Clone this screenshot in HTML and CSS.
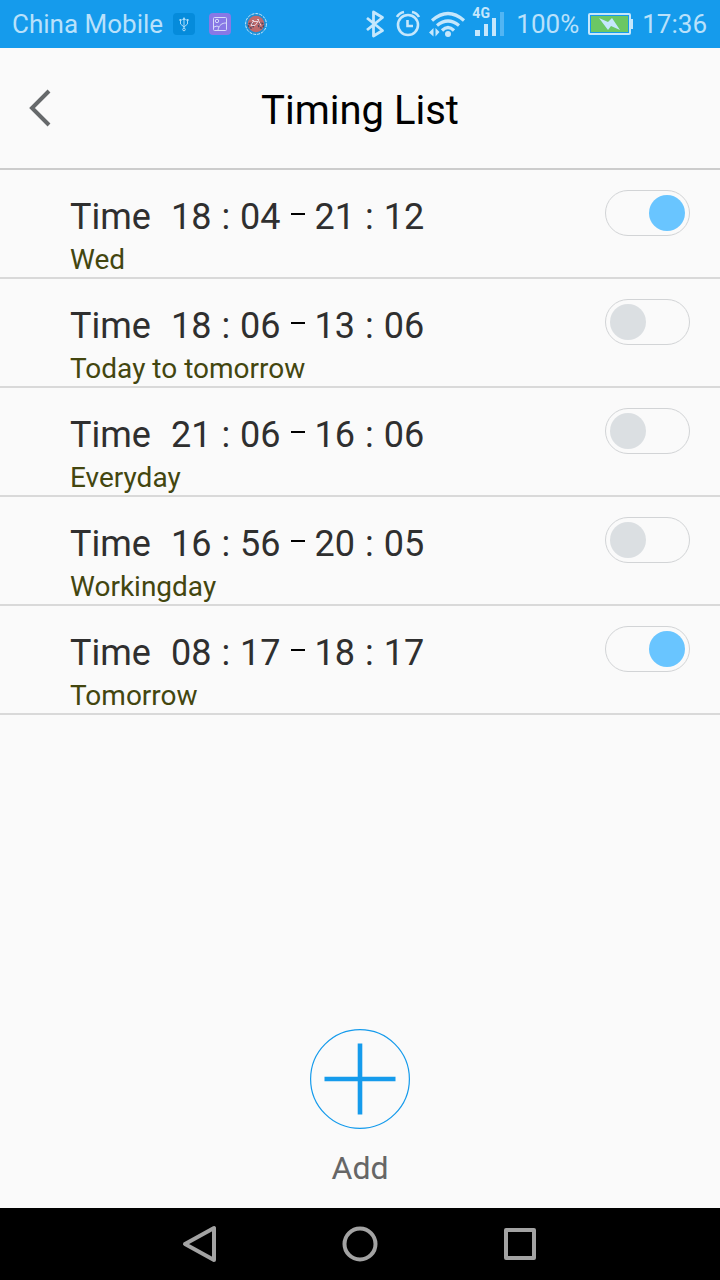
FILE: index.html
```
<!DOCTYPE html>
<html lang="en">
<head>
    <meta charset="utf-8">
    <meta name="viewport" content="width=device-width, initial-scale=1">
    <title>Timing List</title>
    <link rel="stylesheet" href="styles.css">
</head>
<body>
    <div class="statusbar">
        <span class="carrier">China Mobile</span>
        <div class="notices">
            <svg width="22" height="22" viewBox="0 0 22 22">
                <rect width="22" height="22" rx="4" fill="#058bdb"/>
                <g fill="none" stroke="#a9dbfa" stroke-width="1">
                    <path d="M11 6v9M7.500 8v3l3.500 3 3.500-3V8"/>
                    <circle cx="11" cy="16.500" r="1.300"/>
                </g>
                <path d="M11 4l2 3H9zM6.500 6h2v2h-2zM13.500 6h2v2h-2z" fill="#a9dbfa"/>
            </svg>
            <svg width="22" height="22" viewBox="0 0 22 22">
                <rect width="22" height="22" rx="4" fill="#8878e6"/>
                <g fill="none" stroke="#d6dcfa" stroke-width="1">
                    <rect x="4.500" y="4.500" width="13" height="13" rx="1"/>
                    <circle cx="8" cy="8" r="1.700"/>
                    <path d="M5 14l3-1 2 1M9 17c1-5 4-7 8-7"/>
                </g>
            </svg>
            <svg width="22" height="22" viewBox="0 0 22 22">
                <circle cx="11" cy="11" r="10.400" fill="#1b8fd6" stroke="#cfeafa" stroke-width="1" stroke-dasharray="3 1"/>
                <circle cx="11" cy="11" r="8.300" fill="#bf6a6c"/>
                <g fill="none" stroke="#4c4660" stroke-width="1.400" stroke-dasharray="2 1">
                    <circle cx="6" cy="12.500" r="2.500"/>
                    <circle cx="16" cy="12.500" r="2.500"/>
                </g>
                <path d="M6 12.500l2-4h5l-3 4H6M13 6.500l3 6M7 7.500h2M12 6.500h2" fill="none" stroke="#e6cfd8" stroke-width="1"/>
            </svg>
        </div>
        <div class="signals">
            <svg width="28" height="28" viewBox="0 0 28 28">
                <path d="M3 8l15.500 12.500-9 5.500V2l9 5.500L3 20" fill="none" stroke="#c5e7fc" stroke-width="2.800" stroke-linejoin="round"/>
            </svg>
            <svg width="28" height="28" viewBox="0 0 28 28">
                <g fill="none" stroke="#c5e7fc" stroke-width="2.600">
                    <circle cx="12" cy="15" r="10"/>
                    <path d="M11.500 10v6H17M1 7q2-4 7-5M23 7q-2-4-7-5"/>
                </g>
            </svg>
            <svg width="40" height="28" viewBox="0 0 40 28">
                <g fill="none" stroke="#c5e7fc" stroke-width="3.200">
                    <path d="M4 10.500q16-14 32 0M9 15.500q11-9 22 0M14 20.500q6-6 12 0"/>
                </g>
                <circle cx="20" cy="24" r="3" fill="#c5e7fc"/>
                <path d="M5.500 18v8.500L1 22.500zM7.500 18v8.500l4-4.500z" fill="#c5e7fc"/>
            </svg>
            <div class="cell">
                <span class="cell-type">4G</span>
                <svg width="32" height="26" viewBox="0 0 32 26">
                    <path d="M3 19h5v6H3zM12 13h4v12h-4zM20 7h4v18h-4z" fill="#c5e7fc"/>
                    <path d="M28 1h4v24h-4z" fill="#51b5f3"/>
                </svg>
            </div>
        </div>
        <span class="percent">100%</span>
        <svg class="battery" width="45" height="22" viewBox="0 0 45 22">
            <rect x="1" y="1" width="41" height="20" rx="1" fill="none" stroke="#c5e7fc" stroke-width="2"/>
            <rect x="3" y="3" width="37" height="16" fill="#6bc764"/>
            <path d="M43 6h2v10h-2z" fill="#c5e7fc"/>
            <path d="M11 5l9 4 4-4 8 12-9-4-3 4z" fill="#c5e7fc"/>
        </svg>
        <span class="clock">17:36</span>
    </div>

    <header class="topbar">
        <button class="back" type="button" aria-label="Back">
            <svg width="22" height="38" viewBox="0 0 22 38">
                <path d="M20 2L3 19l17 17" fill="none" stroke="#66696b" stroke-width="4"/>
            </svg>
        </button>
        <h1>Timing List</h1>
    </header>

    <main>
        <ul class="timers">
            <li>
                <label for="timer1">
                    <span class="title">Time <span class="time">18 <b>:</b> 04</span><i class="dash"></i><span class="time">21 <b>:</b> 12</span></span>
                    <span class="repeat">Wed</span>
                </label>
                <input class="switch" type="checkbox" id="timer1" checked>
            </li>
            <li>
                <label for="timer2">
                    <span class="title">Time <span class="time">18 <b>:</b> 06</span><i class="dash"></i><span class="time">13 <b>:</b> 06</span></span>
                    <span class="repeat">Today to tomorrow</span>
                </label>
                <input class="switch" type="checkbox" id="timer2">
            </li>
            <li>
                <label for="timer3">
                    <span class="title">Time <span class="time">21 <b>:</b> 06</span><i class="dash"></i><span class="time">16 <b>:</b> 06</span></span>
                    <span class="repeat">Everyday</span>
                </label>
                <input class="switch" type="checkbox" id="timer3">
            </li>
            <li>
                <label for="timer4">
                    <span class="title">Time <span class="time">16 <b>:</b> 56</span><i class="dash"></i><span class="time">20 <b>:</b> 05</span></span>
                    <span class="repeat">Workingday</span>
                </label>
                <input class="switch" type="checkbox" id="timer4">
            </li>
            <li>
                <label for="timer5">
                    <span class="title">Time <span class="time">08 <b>:</b> 17</span><i class="dash"></i><span class="time">18 <b>:</b> 17</span></span>
                    <span class="repeat">Tomorrow</span>
                </label>
                <input class="switch" type="checkbox" id="timer5" checked>
            </li>
        </ul>
    </main>

    <button class="add" type="button">
        <svg width="100" height="100" viewBox="0 0 100 100" fill="none" stroke="#159bec">
            <circle cx="50" cy="50" r="49.400" stroke-width="1.200"/>
            <path d="M50 14.500v71M14.500 50h71" stroke-width="4.600"/>
        </svg>
        <span>Add</span>
    </button>

    <nav class="navbar">
        <button type="button" aria-label="Back">
            <svg width="40" height="40" viewBox="0 0 40 40">
                <path d="M34 4v32L5 20z"/>
            </svg>
        </button>
        <button type="button" aria-label="Home">
            <svg width="40" height="40" viewBox="0 0 40 40">
                <circle cx="20" cy="20" r="15.500"/>
            </svg>
        </button>
        <button type="button" aria-label="Recent apps">
            <svg width="40" height="40" viewBox="0 0 40 40">
                <rect x="6" y="6" width="28" height="28"/>
            </svg>
        </button>
    </nav>
</body>
</html>
```
FILE: styles.css
```
* {
    box-sizing: border-box;
}
body {
    margin: 0;
    min-height: 100vh;
    display: flex;
    flex-direction: column;
    background: #fafafa;
    font-family: Roboto, "Liberation Sans", sans-serif;
}
svg {
    display: block;
    flex: none;
}
button {
    padding: 0;
    border: 0;
    background: none;
    font-family: inherit;
    cursor: pointer;
}

/* phone status bar */
.statusbar {
    display: flex;
    align-items: center;
    height: 48px;
    padding: 0 13px 0 12px;
    background: #159bec;
    color: #b9e1fb;
    font-size: 26px;
    line-height: 50px;
    white-space: nowrap;
}
.notices {
    display: flex;
    gap: 14px;
    margin-left: 10px;
}
.signals {
    display: flex;
    align-items: center;
    gap: 4px;
    margin-left: auto;
}
.cell {
    position: relative;
}
.cell-type {
    position: absolute;
    top: -5px;
    left: 0;
    font-size: 14px;
    font-weight: bold;
    line-height: 14px;
    color: #c5e7fc;
}
.percent {
    margin-left: 12px;
}
.battery {
    margin: 0 9px;
}

/* title */
.topbar {
    display: grid;
    grid-template-columns: 80px 1fr 80px;
    align-items: center;
    height: 122px;
    border-bottom: 2px solid #cccccc;
}
.back {
    display: flex;
    align-items: center;
    height: 80px;
    padding-left: 29px;
}
h1 {
    margin: 6px 0 0;
    font-size: 40px;
    font-weight: normal;
    line-height: 48px;
    text-align: center;
    color: #000;
}

/* list */
main {
    flex: 1;
}
.timers {
    margin: 0;
    padding: 0;
    list-style: none;
}
.timers li {
    display: flex;
    justify-content: space-between;
    align-items: flex-start;
    padding: 20px 30px 0 70px;
    border-bottom: 2px solid #d9d9d9;
}
.timers label {
    padding-top: 6px;
}
.title {
    display: flex;
    align-items: center;
    gap: 20px;
    font-size: 36px;
    line-height: 42px;
    color: #2f2f2f;
}
.time {
    display: flex;
    gap: 10px;
}
.time b {
    font-weight: normal;
}
.dash {
    width: 14px;
    height: 2px;
    margin: 0 -10px 6px;
    background: #000;
}
.repeat {
    display: block;
    padding-top: 4px;
    font-size: 28px;
    line-height: 35px;
    color: #43460f;
}
.switch {
    appearance: none;
    flex: none;
    display: flex;
    align-items: center;
    width: 85px;
    height: 46px;
    margin: 0;
    padding: 0 4px;
    border: 1px solid #d2d4d6;
    border-radius: 23px;
}
.switch::before {
    content: "";
    width: 36px;
    height: 36px;
    border-radius: 50%;
    background: #dbdfe2;
}
.switch:checked {
    justify-content: flex-end;
}
.switch:checked::before {
    background: #69c5ff;
}

.add {
    align-self: center;
    padding-bottom: 20px;
    font-size: 32px;
    line-height: 40px;
    color: #666;
}
.add span {
    display: block;
    margin-top: 19px;
}

/* android buttons */
.navbar {
    display: flex;
    justify-content: center;
    gap: 120px;
    padding: 16px 0;
    background: #000;
}
.navbar svg {
    fill: none;
    stroke: #a3a3a3;
    stroke-width: 4;
    stroke-linejoin: round;
}
```
